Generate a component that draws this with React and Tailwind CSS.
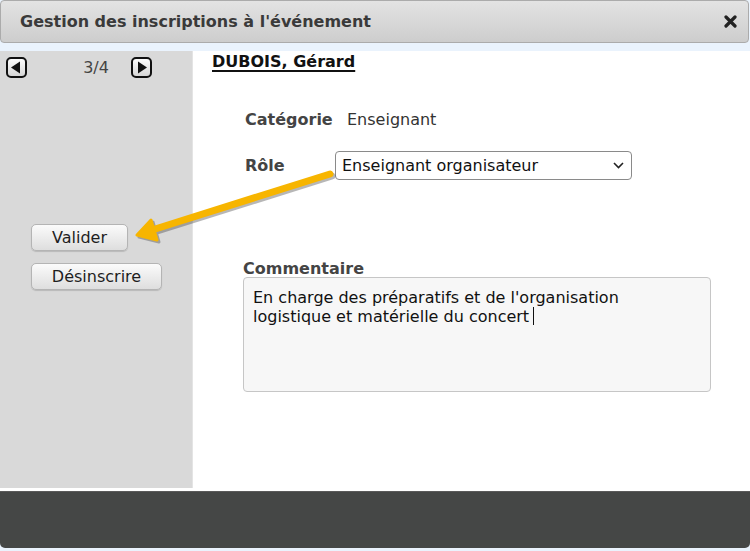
import React from "react";

function NavArrow({ dir }) {
  return (
    <svg width="21" height="21" viewBox="0 0 21 21">
      <defs>
        <linearGradient id={`g-${dir}`} x1="0" y1="0" x2="0" y2="1">
          <stop offset="0" stopColor="#ffffff" />
          <stop offset="1" stopColor="#d4d4d4" />
        </linearGradient>
      </defs>
      <rect x="1" y="1" width="19" height="19" rx="4" fill={`url(#g-${dir})`} stroke="#111" strokeWidth="2" />
      {dir === "left" ? (
        <path d="M5 10.5 L14 4.5 L14 16.5 Z" fill="#111" />
      ) : (
        <path d="M16 10.5 L7 4.5 L7 16.5 Z" fill="#111" />
      )}
    </svg>
  );
}

function GrayButton({ children, className }) {
  return (
    <button
      className={
        "h-[27px] rounded-[5px] border border-[#b4b4b4] bg-gradient-to-b from-[#fbfbfb] to-[#dedede] text-[16px] text-[#1e1e1e] leading-none shadow-[0_1px_1px_rgba(0,0,0,0.15)] " +
        className
      }
    >
      {children}
    </button>
  );
}

export default function App() {
  return (
    <div className="relative w-[750px] h-[551px] overflow-hidden bg-[#eaf3fd] font-['DejaVu_Sans',sans-serif]">
      {/* Dialog title bar */}
      <div className="flex h-[43px] w-[749px] items-center justify-between rounded-[4px] border border-[#ababab] bg-gradient-to-b from-[#e3e3e3] to-[#cdcdcd] pl-[19px] pr-[11px]">
        <span className="text-[16px] font-bold text-[#3a3a3a]">Gestion des inscriptions à l'événement</span>
        <svg width="13" height="13" viewBox="0 0 13 13">
          <path d="M2 2 L11 11 M11 2 L2 11" stroke="#222" strokeWidth="3.2" strokeLinecap="round" />
        </svg>
      </div>

      <div className="h-[8px]" />

      {/* Body */}
      <div className="flex h-[440px] bg-white">
        <div className="flex h-[437px] w-[193px] flex-col bg-[#d9d9d9] border-r border-[#e4e4e4]">
          <div className="flex items-center pt-[6px]">
            <div className="ml-[6px]">
              <NavArrow dir="left" />
            </div>
            <span className="ml-[53px] w-[32px] text-center text-[16px] leading-[20px] text-[#444]">3/4</span>
            <div className="ml-[19px]">
              <NavArrow dir="right" />
            </div>
          </div>
          <GrayButton className="ml-[31px] mt-[146px] w-[97px]">Valider</GrayButton>
          <GrayButton className="ml-[31px] mt-[12px] w-[131px]">Désinscrire</GrayButton>
        </div>

        <div className="flex-1 pl-[19px]">
          <div className="mt-[1px] text-[16px] leading-[20px] font-bold text-[#111] underline underline-offset-[3px] decoration-[1.5px]">
            DUBOIS, Gérard
          </div>
          <div className="ml-[33px] mt-[38px] flex items-center text-[16px] leading-[20px]">
            <span className="w-[102px] font-bold text-[#444]">Catégorie</span>
            <span className="text-[#333]">Enseignant</span>
          </div>
          <div className="ml-[33px] mt-[21px] flex items-center text-[16px] leading-[20px]">
            <span className="w-[90px] font-bold text-[#444]">Rôle</span>
            <div className="flex h-[29px] w-[297px] items-center justify-between rounded-[4px] border border-[#8a8a8a] bg-white pl-[6px] pr-[7px] text-[#111]">
              <span>Enseignant organisateur</span>
              <svg width="11" height="7" viewBox="0 0 11 7">
                <path d="M1 1 L5.5 5.5 L10 1" stroke="#222" strokeWidth="1.6" fill="none" />
              </svg>
            </div>
          </div>
          <div className="ml-[31px] mt-[80px] text-[16px] font-bold leading-[17px] text-[#444]">Commentaire</div>
          <div className="ml-[31px] h-[115px] w-[468px] rounded-[4px] border border-[#c6c6c6] bg-[#f7f7f7] px-[9px] pt-[10px] text-[16px] leading-[19px] text-[#111]">
            En charge des préparatifs et de l'organisation
            <br />
            logistique et matérielle du concert
            <span className="ml-[4px] inline-block h-[18px] w-[1px] align-[-3px] bg-[#111]" />
          </div>
        </div>
      </div>

      {/* Footer */}
      <div className="h-[57px] w-[750px] rounded-b-[5px] border-t border-[#5a5a5a] bg-[#454746]" />

      {/* Callout arrow over the content */}
      <svg className="absolute left-0 top-0 pointer-events-none" width="750" height="551" viewBox="0 0 750 551">
        <g transform="translate(2 2)" opacity="0.35">
          <path d="M330 174 L152 230" stroke="#333" strokeWidth="7" strokeLinecap="round" />
          <path d="M137 235 L151 220 L157 240 Z" fill="#333" stroke="#333" strokeWidth="3" strokeLinejoin="round" />
        </g>
        <path d="M330 174 L152 230" stroke="#f7b500" strokeWidth="7" strokeLinecap="round" />
        <path d="M137 235 L151 220 L157 240 Z" fill="#f7b500" stroke="#f7b500" strokeWidth="3" strokeLinejoin="round" />
      </svg>
    </div>
  );
}
